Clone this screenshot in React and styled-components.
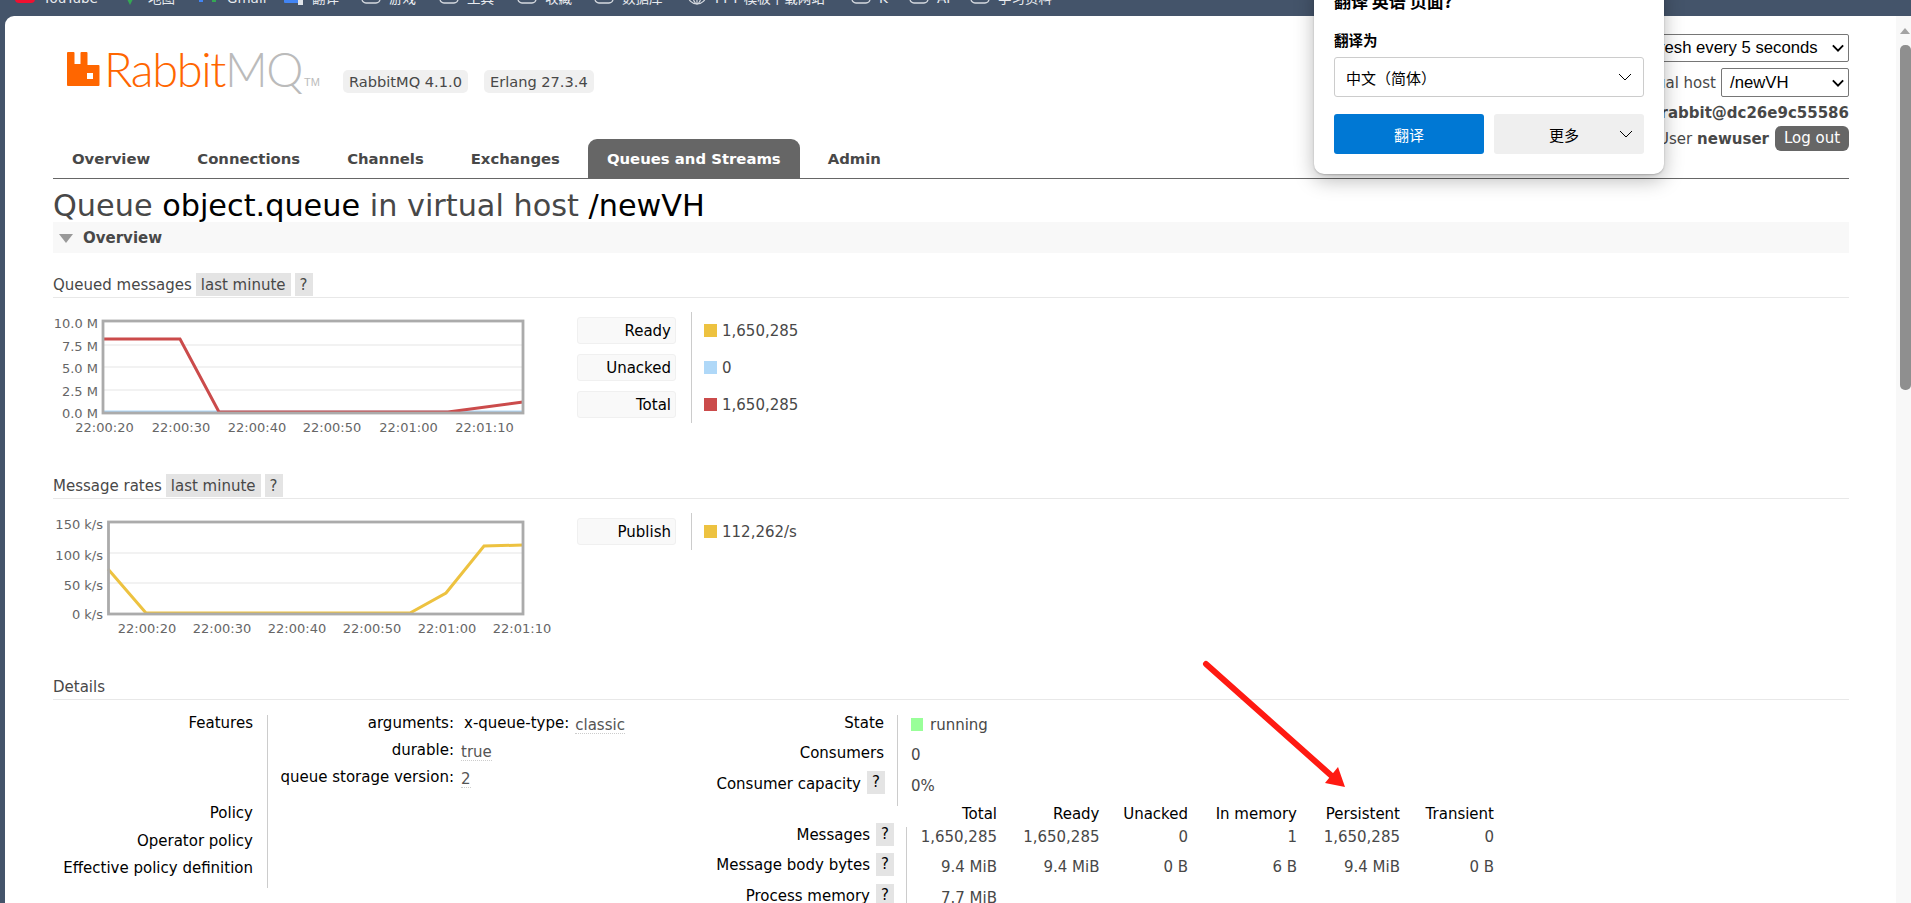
import React from 'react'
import styled, { createGlobalStyle } from 'styled-components'

const GlobalStyle = createGlobalStyle`
   html, body { margin: 0; padding: 0; height: 100%; overflow: hidden; }
   body { background: #44546a; font-family: "DejaVu Sans", Verdana, sans-serif; font-size: 15px; color: #484848; }
`

const Frame = styled.div`
   width: 1911px;
   height: 903px;
   display: flex;
   flex-direction: column;
   position: relative;
   overflow: hidden;
`

const BookmarkBar = styled.div`
   height: 16px;
   flex: none;
   display: flex;
   padding-left: 15px;
   color: #e8ebef;
   font-size: 13.5px;
   font-family: "DejaVu Sans", "Noto Sans CJK SC", sans-serif;
`

const BookmarkItem = styled.div`
   width: ${p => p.$width}px;
   flex: none;
   height: 5px;
   display: flex;
   gap: 8px;
   overflow: visible;
   white-space: nowrap;
   span {
      display: block;
      margin-top: -9px;
      line-height: 14px;
   }
   svg {
      flex: none;
      margin-top: -11px;
   }
`

const BookmarkIcon = ({ kind }) => (
   <svg width="20" height="16" viewBox="0 0 20 16">
      {kind === 'red' && <rect x="0" y="-2" width="20" height="16" rx="4" fill="#f01030" />}
      {kind === 'pin' && <path d="M6 8 H14 L10 16 Z" fill="#34a853" />}
      {kind === 'mail' && (
         <>
            <rect x="0" y="8" width="4" height="5" fill="#4285f4" />
            <rect x="13" y="8" width="4" height="5" fill="#34a853" />
         </>
      )}
      {kind === 'translate' && (
         <>
            <rect x="0" y="8" width="16" height="6" rx="1" fill="#4285f4" />
            <rect x="14" y="8" width="5" height="8" fill="#dfe3e8" />
         </>
      )}
      {kind === 'folder' && <rect x="1" y="-4" width="18" height="18" rx="4" fill="none" stroke="#d5d9df" strokeWidth="1.3" />}
      {kind === 'globe' && (
         <g fill="none" stroke="#d5d9df" strokeWidth="1.2">
            <circle cx="10" cy="6" r="9" />
            <ellipse cx="10" cy="6" rx="4" ry="9" />
            <path d="M10 -3 V15" />
         </g>
      )}
   </svg>
)

const bookmarks = [
   { kind: 'red', width: 105, text: 'YouTube' },
   { kind: 'pin', width: 79, text: '地图' },
   { kind: 'mail', width: 85, text: 'Gmail' },
   { kind: 'translate', width: 77, text: '翻译' },
   { kind: 'folder', width: 78, text: '游戏' },
   { kind: 'folder', width: 78, text: '工具' },
   { kind: 'folder', width: 77, text: '收藏' },
   { kind: 'folder', width: 93, text: '数据库' },
   { kind: 'globe', width: 164, text: 'PPT 模板下载网站' },
   { kind: 'folder', width: 58, text: 'K' },
   { kind: 'folder', width: 61, text: 'AI' },
   { kind: 'folder', width: 120, text: '学习资料' },
]

const Window = styled.div`
   flex: 1;
   min-height: 0;
   margin-left: 5px;
   display: flex;
   background: #fff;
   border-radius: 9px 0 0 0;
   overflow: hidden;
`

const Page = styled.div`
   flex: 1;
   min-width: 0;
   padding: 0 47px 0 48px;
   display: flex;
   flex-direction: column;
`

const Scrollbar = styled.div`
   width: 15px;
   box-sizing: border-box;
   flex: none;
   background: #f8f8f8;
   display: flex;
   flex-direction: column;
   padding: 12px 0 0 4px;
   gap: 11px;
   &::before {
      content: '';
      width: 0;
      border-left: 5.5px solid transparent;
      border-right: 5.5px solid transparent;
      border-bottom: 6px solid #a3a3a3;
   }
`

const Thumb = styled.div`
   width: 11px;
   height: 345px;
   background: #8f8f8f;
   border-radius: 5px;
`

const Header = styled.header`
   height: 123px;
   flex: none;
   display: flex;
   justify-content: space-between;
`

const Brand = styled.div`
   display: flex;
   align-items: flex-start;
   padding: 36px 0 0 14px;
`

const Mark = styled.svg`
   flex: none;
   margin-right: 4px;
`

const LogoWord = styled.div`
   font-family: "Lato", "Liberation Sans", sans-serif;
   font-weight: 300;
   font-size: 47px;
   letter-spacing: -1.4px;
   line-height: 34px;
   color: #ff6600;
   width: 199px;
   flex: none;
   white-space: nowrap;
   span { color: #bbb; }
`

const Tm = styled.span`
   font-family: "Liberation Sans", sans-serif;
   font-size: 11px;
   line-height: 10px;
   width: 19px;
   flex: none;
   color: #bbb;
   margin: 25px 0 0 1px;
`

const VersionList = styled.div`
   display: flex;
   gap: 16px;
   margin: 18px 0 0 20px;
`

const Version = styled.span`
   background: #f0f0f0;
   border-radius: 5px;
   padding: 0 6px;
   line-height: 23px;
   font-size: 14.6px;
`

const HeaderRight = styled.div`
   display: flex;
   flex-direction: column;
   align-items: flex-end;
   padding-top: 18px;
`

const FakeSelect = styled.div`
   width: ${p => p.$width}px;
   height: ${p => p.$h}px;
   flex: none;
   box-sizing: border-box;
   border: 1px solid #767676;
   border-radius: 2px;
   display: flex;
   align-items: center;
   justify-content: space-between;
   padding: 0 4px 0 8px;
   color: #000;
   font-family: "Liberation Sans", sans-serif;
   font-size: 16.7px;
   white-space: nowrap;
`

const HeaderLine = styled.div`
   flex: none;
   display: flex;
   align-items: center;
   gap: 5px;
   margin-top: ${p => p.$top || 0}px;
   white-space: nowrap;
   line-height: 16px;
   b { font-weight: bold; }
`

const LogOut = styled.span`
   background: #666;
   color: #fff;
   border-radius: 6px;
   width: 74px;
   height: 25px;
   line-height: 25px;
   text-align: center;
   margin-left: 1px;
`

const Tabs = styled.nav`
   flex: none;
   height: 40px;
   box-sizing: border-box;
   display: flex;
   gap: 9px;
   border-bottom: 1px solid #666;
`

const Tab = styled.a`
   height: 39px;
   box-sizing: border-box;
   padding: 0 19px;
   display: flex;
   align-items: center;
   font-weight: bold;
   font-size: 14.85px;
   border-radius: 9px 9px 0 0;
   color: ${p => p.$active ? '#fff' : '#484848'};
   background: ${p => p.$active ? '#666' : 'transparent'};
`

const Title = styled.h1`
   flex: none;
   margin: 0;
   height: 43px;
   box-sizing: border-box;
   padding-top: 9px;
   font-size: 30.3px;
   line-height: 36px;
   font-weight: normal;
   white-space: nowrap;
   b { font-weight: normal; color: #000; }
`

const Section = styled.div`
   flex: none;
   height: 31px;
   background: #f8f8f8;
   display: flex;
   align-items: center;
   gap: 10px;
   padding-left: 6px;
   font-weight: bold;
   &::before {
      content: '';
      border-left: 7px solid transparent;
      border-right: 7px solid transparent;
      border-top: 9px solid #999;
      margin-top: 2px;
   }
`

const SubHeading = styled.h3`
   flex: none;
   margin: ${p => p.$top || 0}px 0 0;
   height: 25px;
   box-sizing: border-box;
   border-bottom: 1px solid #e8e8e8;
   display: flex;
   gap: 4px;
   font-size: 15px;
   line-height: 25px;
   font-weight: normal;
`

const Chip = styled.span`
   background: #e4e4e4;
   height: 23px;
   padding: 0 5px;
`

const ChartRow = styled.div`
   flex: none;
   display: flex;
   align-items: flex-start;
   height: 176px;
`

const Chart = styled.svg`
   flex: none;
   display: block;
   width: 500px;
   height: 140px;
   font-family: "DejaVu Sans", sans-serif;
   font-size: 13px;
   fill: #666;
`

const Legend = styled.div`
   margin: 14px 0 0 24px;
   display: grid;
   grid-template-columns: 99px auto;
   grid-auto-rows: 37px;
   column-gap: 15px;
   align-items: center;
`

const LegendLabel = styled.div`
   background: #f9f9f9;
   border: 1px solid #f0f0f0;
   border-radius: 3px;
   box-sizing: border-box;
   height: 27px;
   text-align: right;
   padding-right: 4px;
   line-height: 27px;
   color: #000;
`

const LegendValue = styled.div`
   height: 37px;
   border-left: 1px solid #ccc;
   padding-left: 12px;
   display: flex;
   align-items: center;
   gap: 5px;
   white-space: nowrap;
   &::before {
      content: '';
      flex: none;
      width: 13px;
      height: 13px;
      background: ${p => p.$color};
   }
`

const DetailsGrid = styled.div`
   display: flex;
   align-items: flex-start;
   margin-top: 15px;
`

const LeftColumn = styled.div`
   width: 214px;
   flex: none;
   text-align: right;
   color: #000;
`

const LeftLabel = styled.div`
   height: ${p => p.$h}px;
   line-height: 16px;
   padding-right: 14px;
   box-sizing: border-box;
   white-space: nowrap;
`

const FeatureColumn = styled.div`
   width: 353px;
   flex: none;
   height: 173px;
   border-left: 1px solid #ccc;
   box-sizing: border-box;
`

const FeatureRow = styled.div`
   display: flex;
   height: 27px;
   line-height: 16px;
   white-space: nowrap;
   color: #000;
   em {
      font-style: normal;
      color: #555;
      border-bottom: 1px dotted #ccc;
      height: 18px;
      line-height: 20px;
      margin-left: 6px;
   }
`

const FeatureKey = styled.span`
   flex: none;
   width: 186px;
   margin-right: ${p => p.$gap || 1}px;
   text-align: right;
`

const Stats = styled.div`
   flex: 1;
   min-width: 0;
   display: flex;
   flex-direction: column;
`

const StateTable = styled.div`
   display: grid;
   grid-template-columns: 277px auto;
   grid-auto-rows: 30.33px;
`

const RowLabel = styled.div`
   padding-right: ${p => p.$pad || 12}px;
   color: #000;
   display: flex;
   justify-content: flex-end;
   align-items: flex-start;
   gap: 6px;
   line-height: 16px;
   white-space: nowrap;
`

const StateValue = styled.div`
   border-left: 1px solid #ccc;
   padding-left: 13px;
   display: flex;
   align-items: flex-start;
   gap: 7px;
   line-height: 20px;
   &::before {
      content: '';
      display: ${p => p.$dot ? 'block' : 'none'};
      width: 12px;
      height: 13px;
      margin-top: 3px;
      background: #99ff99;
   }
`

const SmallChip = styled.span`
   background: #e4e4e4;
   width: 18px;
   height: 23px;
   flex: none;
   margin-top: ${p => p.$top}px;
   text-align: center;
   line-height: 23px;
`

const CountTable = styled.div`
   display: grid;
   grid-template-columns: 286px 91px 102.5px 88.5px 109px 103px 94px;
   grid-auto-rows: 30.5px;
   text-align: right;
`

const CountHead = styled.div`
   color: #000;
   height: 21px;
   line-height: 16px;
   white-space: nowrap;
`

const CountCell = styled.div`
   line-height: 20px;
   white-space: nowrap;
   border-left: ${p => p.$first ? '1px solid #ccc' : 'none'};
`

const HeadRow = styled.div`
   display: grid;
   grid-template-columns: 286px 91px 102.5px 88.5px 109px 103px 94px;
   text-align: right;
`

const countRows = [
   { label: 'Messages', cells: ['1,650,285', '1,650,285', '0', '1', '1,650,285', '0'] },
   { label: 'Message body bytes', cells: ['9.4 MiB', '9.4 MiB', '0 B', '6 B', '9.4 MiB', '0 B'] },
   { label: 'Process memory', cells: ['7.7 MiB', '', '', '', '', ''] },
]

const queuedTimes = [[104.5, '22:00:20'], [181, '22:00:30'], [257, '22:00:40'], [332, '22:00:50'], [408.5, '22:01:00'], [484.5, '22:01:10']]
const rateTimes = [[147, '22:00:20'], [222, '22:00:30'], [297, '22:00:40'], [372, '22:00:50'], [447, '22:01:00'], [522, '22:01:10']]

const QueuedChart = () => (
   <Chart viewBox="53 298 500 140">
      {[['10.0 M', 323], ['7.5 M', 346], ['5.0 M', 368], ['2.5 M', 391], ['0.0 M', 413]].map(([t, y]) => (
         <text key={t} x="98" y={y + 5} textAnchor="end">{t}</text>
      ))}
      {[345, 367, 390].map(y => <line key={y} x1="103" x2="523" y1={y} y2={y} stroke="#eee" strokeWidth="1.5" />)}
      <line x1="103" x2="523" y1="412" y2="412" stroke="#afd8f8" strokeWidth="3" />
      <polyline points="103,339 180,339 219,412 448,412 523,402" stroke="#cb4b4b" strokeWidth="3" fill="none" />
      <rect x="103" y="321" width="420" height="92" stroke="#ababab" strokeWidth="2.8" fill="none" />
      {queuedTimes.map(([x, t]) => <text key={t} x={x} y="432" textAnchor="middle">{t}</text>)}
   </Chart>
)

const RatesChart = () => (
   <Chart viewBox="53 499 500 140">
      {[['150 k/s', 524], ['100 k/s', 555], ['50 k/s', 585], ['0 k/s', 614]].map(([t, y]) => (
         <text key={t} x="103" y={y + 5} textAnchor="end">{t}</text>
      ))}
      {[553, 583].map(y => <line key={y} x1="108" x2="523" y1={y} y2={y} stroke="#eee" strokeWidth="1.5" />)}
      <polyline points="108,569 146,613 410,613 446,593 484,546 523,545" stroke="#edc240" strokeWidth="3" fill="none" />
      <rect x="108.5" y="522" width="414.5" height="92" stroke="#ababab" strokeWidth="2.8" fill="none" />
      {rateTimes.map(([x, t]) => <text key={t} x={x} y="633" textAnchor="middle">{t}</text>)}
   </Chart>
)

const Popup = styled.div`
   position: absolute;
   left: 1314px;
   top: -20px;
   width: 350px;
   height: 194px;
   box-sizing: border-box;
   padding: 10px 20px 0;
   background: #fff;
   border-radius: 10px;
   box-shadow: 0 6px 20px rgba(0,0,0,.28), 0 1px 2px rgba(0,0,0,.2);
   font-family: "Noto Sans CJK SC", sans-serif;
   font-size: 15px;
   color: #000;
   display: flex;
   flex-direction: column;
`

const PopupTitle = styled.div`
   font-size: 17px;
   font-weight: bold;
   line-height: 22px;
`

const PopupLabel = styled.div`
   font-weight: bold;
   font-size: 14.5px;
   margin-top: 19px;
   line-height: 18px;
`

const PopupSelect = styled.div`
   margin-top: 8px;
   height: 40px;
   box-sizing: border-box;
   border: 1px solid #ccc;
   border-radius: 3px;
   padding: 0 11px;
   display: flex;
   justify-content: space-between;
   align-items: center;
`

const PopupButtons = styled.div`
   margin-top: 17px;
   display: flex;
   justify-content: space-between;
`

const PopupButton = styled.div`
   width: 150px;
   height: 40px;
   border-radius: 3px;
   box-sizing: border-box;
   padding-right: ${p => p.$primary ? 0 : 10}px;
   background: ${p => p.$primary ? '#0078d4' : '#efefef'};
   color: ${p => p.$primary ? '#fff' : '#000'};
   display: flex;
   align-items: center;
   justify-content: center;
   position: relative;
   svg { position: absolute; right: 11px; top: 13px; }
`

const Chevron = ({ size = 14, weight = 1 }) => (
   <svg width={size} height={size} viewBox="0 0 14 14" fill="none" stroke="currentColor" strokeWidth={weight}>
      <path d="M1 4 L7 10 L13 4" />
   </svg>
)

const Arrow = styled.svg`
   position: absolute;
   left: 1195px;
   top: 655px;
   width: 160px;
   height: 140px;
`

const RabbitMark = () => (
   <Mark width="33" height="34" viewBox="0 0 33 34">
      <path fill="#ff6600" fillRule="evenodd" d="M1 0h5.5a1 1 0 0 1 1 1v11h6V1a1 1 0 0 1 1-1h5a1 1 0 0 1 1 1v12h11a1 1 0 0 1 1 1v19a1 1 0 0 1-1 1H1a1 1 0 0 1-1-1V1a1 1 0 0 1 1-1zM20 21h6v6h-6z" />
   </Mark>
)

const App = () => (
   <Frame>
      <GlobalStyle />
      <BookmarkBar>
         {bookmarks.map(b => (
            <BookmarkItem key={b.text} $width={b.width}>
               <BookmarkIcon kind={b.kind} />
               <span>{b.text}</span>
            </BookmarkItem>
         ))}
      </BookmarkBar>
      <Window>
         <Page>
            <Header>
               <Brand>
                  <RabbitMark />
                  <LogoWord>Rabbit<span>MQ</span></LogoWord>
                  <Tm>TM</Tm>
                  <VersionList>
                     <Version>RabbitMQ 4.1.0</Version>
                     <Version>Erlang 27.3.4</Version>
                  </VersionList>
               </Brand>
               <HeaderRight>
                  <FakeSelect $width={225} $h={28}>Refresh every 5 seconds <Chevron size={12} weight={2.2} /></FakeSelect>
                  <HeaderLine $top={6}>Virtual host
                     <FakeSelect $width={128} $h={29}>/newVH <Chevron size={12} weight={2.2} /></FakeSelect>
                  </HeaderLine>
                  <HeaderLine $top={8}><b>rabbit@dc26e9c55586</b></HeaderLine>
                  <HeaderLine $top={5}>User <b>newuser</b> <LogOut>Log out</LogOut></HeaderLine>
               </HeaderRight>
            </Header>
            <Tabs>
               <Tab>Overview</Tab>
               <Tab>Connections</Tab>
               <Tab>Channels</Tab>
               <Tab>Exchanges</Tab>
               <Tab $active>Queues and Streams</Tab>
               <Tab>Admin</Tab>
            </Tabs>
            <Title>Queue <b>object.queue</b> in virtual host <b>/newVH</b></Title>
            <Section>Overview</Section>
            <SubHeading $top={20}>Queued messages <Chip>last minute</Chip><Chip>?</Chip></SubHeading>
            <ChartRow>
               <QueuedChart />
               <Legend>
                  <LegendLabel>Ready</LegendLabel><LegendValue $color="#edc240">1,650,285</LegendValue>
                  <LegendLabel>Unacked</LegendLabel><LegendValue $color="#afd8f8">0</LegendValue>
                  <LegendLabel>Total</LegendLabel><LegendValue $color="#cb4b4b">1,650,285</LegendValue>
               </Legend>
            </ChartRow>
            <SubHeading>Message rates <Chip>last minute</Chip><Chip>?</Chip></SubHeading>
            <ChartRow>
               <RatesChart />
               <Legend>
                  <LegendLabel>Publish</LegendLabel><LegendValue $color="#edc240">112,262/s</LegendValue>
               </Legend>
            </ChartRow>
            <SubHeading>Details</SubHeading>
            <DetailsGrid>
               <LeftColumn>
                  <LeftLabel $h={90}>Features</LeftLabel>
                  <LeftLabel $h={28}>Policy</LeftLabel>
                  <LeftLabel $h={27}>Operator policy</LeftLabel>
                  <LeftLabel $h={28}>Effective policy definition</LeftLabel>
               </LeftColumn>
               <FeatureColumn>
                  <FeatureRow><FeatureKey $gap={10}>arguments:</FeatureKey>x-queue-type:<em>classic</em></FeatureRow>
                  <FeatureRow><FeatureKey>durable:</FeatureKey><em>true</em></FeatureRow>
                  <FeatureRow><FeatureKey>queue storage version:</FeatureKey><em>2</em></FeatureRow>
               </FeatureColumn>
               <Stats>
                  <StateTable>
                     <RowLabel $pad={13}>State</RowLabel><StateValue $dot>running</StateValue>
                     <RowLabel $pad={13}>Consumers</RowLabel><StateValue>0</StateValue>
                     <RowLabel $pad={12}>Consumer capacity <SmallChip $top={-5}>?</SmallChip></RowLabel><StateValue>0%</StateValue>
                  </StateTable>
                  <HeadRow>
                     <span />
                     {['Total', 'Ready', 'Unacked', 'In memory', 'Persistent', 'Transient'].map(h => <CountHead key={h}>{h}</CountHead>)}
                  </HeadRow>
                  <CountTable>
                     {countRows.map(row => (
                        <React.Fragment key={row.label}>
                           <RowLabel>{row.label} <SmallChip $top={-4}>?</SmallChip></RowLabel>
                           {row.cells.map((c, i) => <CountCell key={i} $first={i === 0}>{c}</CountCell>)}
                        </React.Fragment>
                     ))}
                  </CountTable>
               </Stats>
            </DetailsGrid>
         </Page>
         <Scrollbar><Thumb /></Scrollbar>
      </Window>
      <Popup>
         <PopupTitle>翻译 英语 页面?</PopupTitle>
         <PopupLabel>翻译为</PopupLabel>
         <PopupSelect>中文（简体）<Chevron /></PopupSelect>
         <PopupButtons>
            <PopupButton $primary>翻译</PopupButton>
            <PopupButton>更多<Chevron /></PopupButton>
         </PopupButtons>
      </Popup>
      <Arrow viewBox="1195 655 160 140">
         <line x1="1206" y1="664" x2="1334" y2="778" stroke="#ff1a12" strokeWidth="6" strokeLinecap="round" />
         <polygon points="1345,787 1338,767 1325,783" fill="#ff1a12" />
      </Arrow>
   </Frame>
)

export default App
